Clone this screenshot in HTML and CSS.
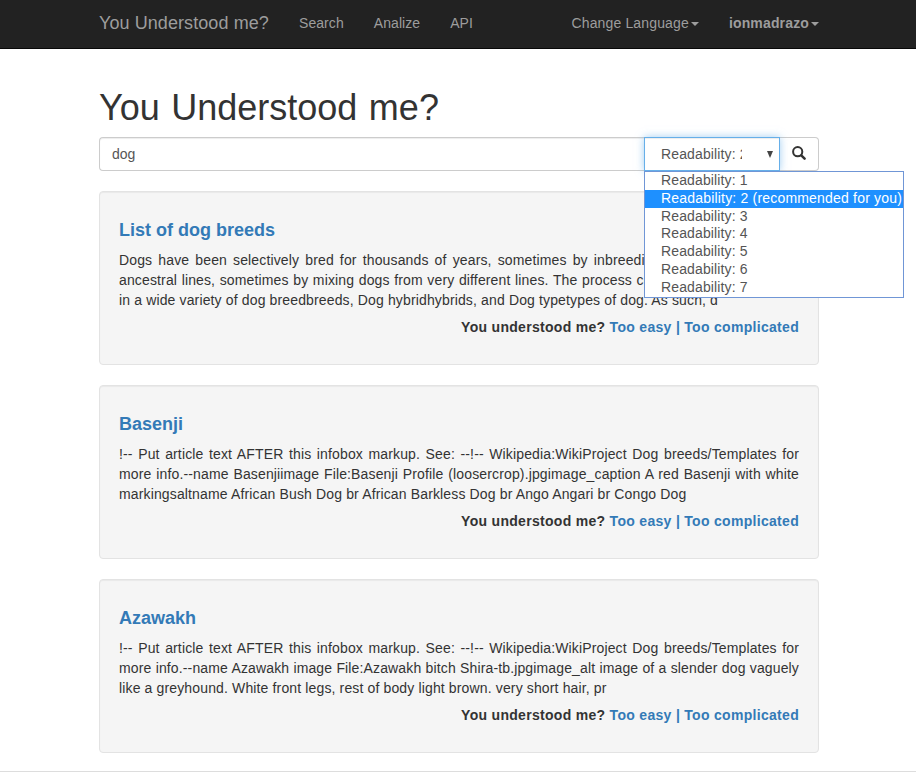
FILE: index.html
```html
<!DOCTYPE html>
<html lang="en">
<head>
<meta charset="utf-8">
<title>You Understood me?</title>
<link rel="stylesheet" href="styles.css">
</head>
<body>
<nav class="navbar">
  <div class="container navbar-inner">
    <a class="brand">You Understood me?</a>
    <a class="nav-link">Search</a>
    <a class="nav-link">Analize</a>
    <a class="nav-link">API</a>
    <div class="nav-right">
      <a class="nav-link language">Change Language<span class="caret"></span></a>
      <a class="nav-link user">ionmadrazo<span class="caret"></span></a>
    </div>
  </div>
</nav>
<main class="container">
  <h1>You Understood me?</h1>
  <form class="search">
    <div class="query">dog</div>
    <div class="level">
      <span class="level-value">Readability: 2</span>
      <svg class="level-arrow" width="6" height="7" viewBox="0 0 6 7"><path d="M0 0h6L3 7z" fill="#444"/></svg>
      <ul class="options">
        <li>Readability: 1</li>
        <li class="selected">Readability: 2 (recommended for you)</li>
        <li>Readability: 3</li>
        <li>Readability: 4</li>
        <li>Readability: 5</li>
        <li>Readability: 6</li>
        <li>Readability: 7</li>
      </ul>
    </div>
    <div class="submit"><svg width="14" height="14" viewBox="0 0 14 14" fill="none" stroke="#333"><circle cx="5.7" cy="5.7" r="4.6" stroke-width="2"/><path d="M9.3 9.3l3.3 3.3" stroke-width="2.5" stroke-linecap="round"/></svg></div>
  </form>
  <article class="well">
    <h4>List of dog breeds</h4>
    <p><span class="line">Dogs have been selectively bred for thousands of years, sometimes by inbreeding dogs from the same</span>
    <span class="line">ancestral lines, sometimes by mixing dogs from very different lines. The process continues today, resulting</span>
    <span class="line last">in a wide variety of dog breedbreeds, Dog hybridhybrids, and Dog typetypes of dog. As such, d</span></p>
    <div class="feedback">You understood me? <a>Too easy</a> <a>|</a> <a>Too complicated</a></div>
  </article>
  <article class="well">
    <h4>Basenji</h4>
    <p><span class="line">!-- Put article text AFTER this infobox markup. See: --!-- Wikipedia:WikiProject Dog breeds/Templates for</span>
    <span class="line">more info.--name Basenjiimage File:Basenji Profile (loosercrop).jpgimage_caption A red Basenji with white</span>
    <span class="line last">markingsaltname African Bush Dog br African Barkless Dog br Ango Angari br Congo Dog</span></p>
    <div class="feedback">You understood me? <a>Too easy</a> <a>|</a> <a>Too complicated</a></div>
  </article>
  <article class="well">
    <h4>Azawakh</h4>
    <p><span class="line">!-- Put article text AFTER this infobox markup. See: --!-- Wikipedia:WikiProject Dog breeds/Templates for</span>
    <span class="line">more info.--name Azawakh image File:Azawakh bitch Shira-tb.jpgimage_alt image of a slender dog vaguely</span>
    <span class="line last">like a greyhound. White front legs, rest of body light brown. very short hair, pr</span></p>
    <div class="feedback">You understood me? <a>Too easy</a> <a>|</a> <a>Too complicated</a></div>
  </article>
</main>
<hr>
</body>
</html>
```
FILE: styles.css
```css
* { box-sizing: border-box; }
body {
  margin: 0;
  height: 772px;
  overflow: hidden;
  background: #fff;
  color: #333;
  font: 14px/20px "Liberation Sans", Arial, sans-serif;
}
.container { width: 720px; margin-left: 99px; }
.navbar { height: 49px; background: #222; border-bottom: 1px solid #080808; color: #9d9d9d; }
.navbar-inner { display: flex; padding-top: 13px; }
.brand { font-size: 18px; width: 170px; margin-right: 15px; white-space: nowrap; letter-spacing: 0.08px; }
.nav-link { padding: 0 15px; white-space: nowrap; letter-spacing: 0.07px; }
.nav-right { display: flex; margin-left: auto; margin-right: -15px; }
.nav-right .nav-link { letter-spacing: 0.15px; }
.user { font-weight: bold; }
.caret {
  display: inline-block;
  margin-left: 2px;
  vertical-align: middle;
  border-top: 4px solid;
  border-left: 4px solid transparent;
  border-right: 4px solid transparent;
}
h1 {
  margin: 39px 0 9px;
  font-size: 36px;
  font-weight: normal;
  line-height: 40px;
  word-spacing: 1.5px;
}
.search { display: flex; height: 34px; margin: 0 0 20px; color: #555; }
.query {
  flex: 1;
  padding: 6px 12px;
  border: 1px solid #ccc;
  border-right: 0;
  border-radius: 4px 0 0 4px;
  box-shadow: inset 0 1px 1px rgba(0,0,0,.075);
}
.level {
  position: relative;
  z-index: 2;
  display: flex;
  align-items: center;
  justify-content: space-between;
  width: 136px;
  padding: 0 6px 0 16px;
  border: 1px solid #66afe9;
  background: #fff;
  letter-spacing: 0.13px;
  box-shadow: inset 0 1px 1px rgba(0,0,0,.075), 0 0 8px rgba(102,175,233,.6);
}
.level-value { width: 81px; overflow: hidden; white-space: nowrap; }
.options {
  position: absolute;
  top: 33px;
  left: -1px;
  width: 260px;
  height: 127px;
  margin: 0;
  padding: 0;
  list-style: none;
  background: #fff;
  border: 1px solid #7096d6;
  line-height: 17.8px;
}
.options li { padding-left: 16px; white-space: nowrap; }
.options .selected { background: #1e90ff; color: #fff; letter-spacing: 0.19px; }
.submit {
  display: flex;
  align-items: center;
  justify-content: center;
  width: 39px;
  padding-bottom: 2px;
  border: 1px solid #ccc;
  border-left: 0;
  border-radius: 0 4px 4px 0;
}
.well {
  height: 174px;
  margin-bottom: 20px;
  padding: 19px;
  border: 1px solid #e3e3e3;
  border-radius: 4px;
  background: #f5f5f5;
  box-shadow: inset 0 1px 1px rgba(0,0,0,.05);
}
h4 { margin: 9px 0 10px; font-size: 18px; line-height: 20px; color: #337ab7; }
p { margin: 0 0 7px; letter-spacing: 0.14px; }
.line { display: block; white-space: nowrap; text-align: justify; text-align-last: justify; }
.last { text-align: left; text-align-last: left; }
.feedback { text-align: right; font-weight: bold; letter-spacing: 0.3px; }
.feedback a { color: #337ab7; }
hr { margin: -2px 0 0; border: 0; border-top: 1px solid #ddd; }
```
